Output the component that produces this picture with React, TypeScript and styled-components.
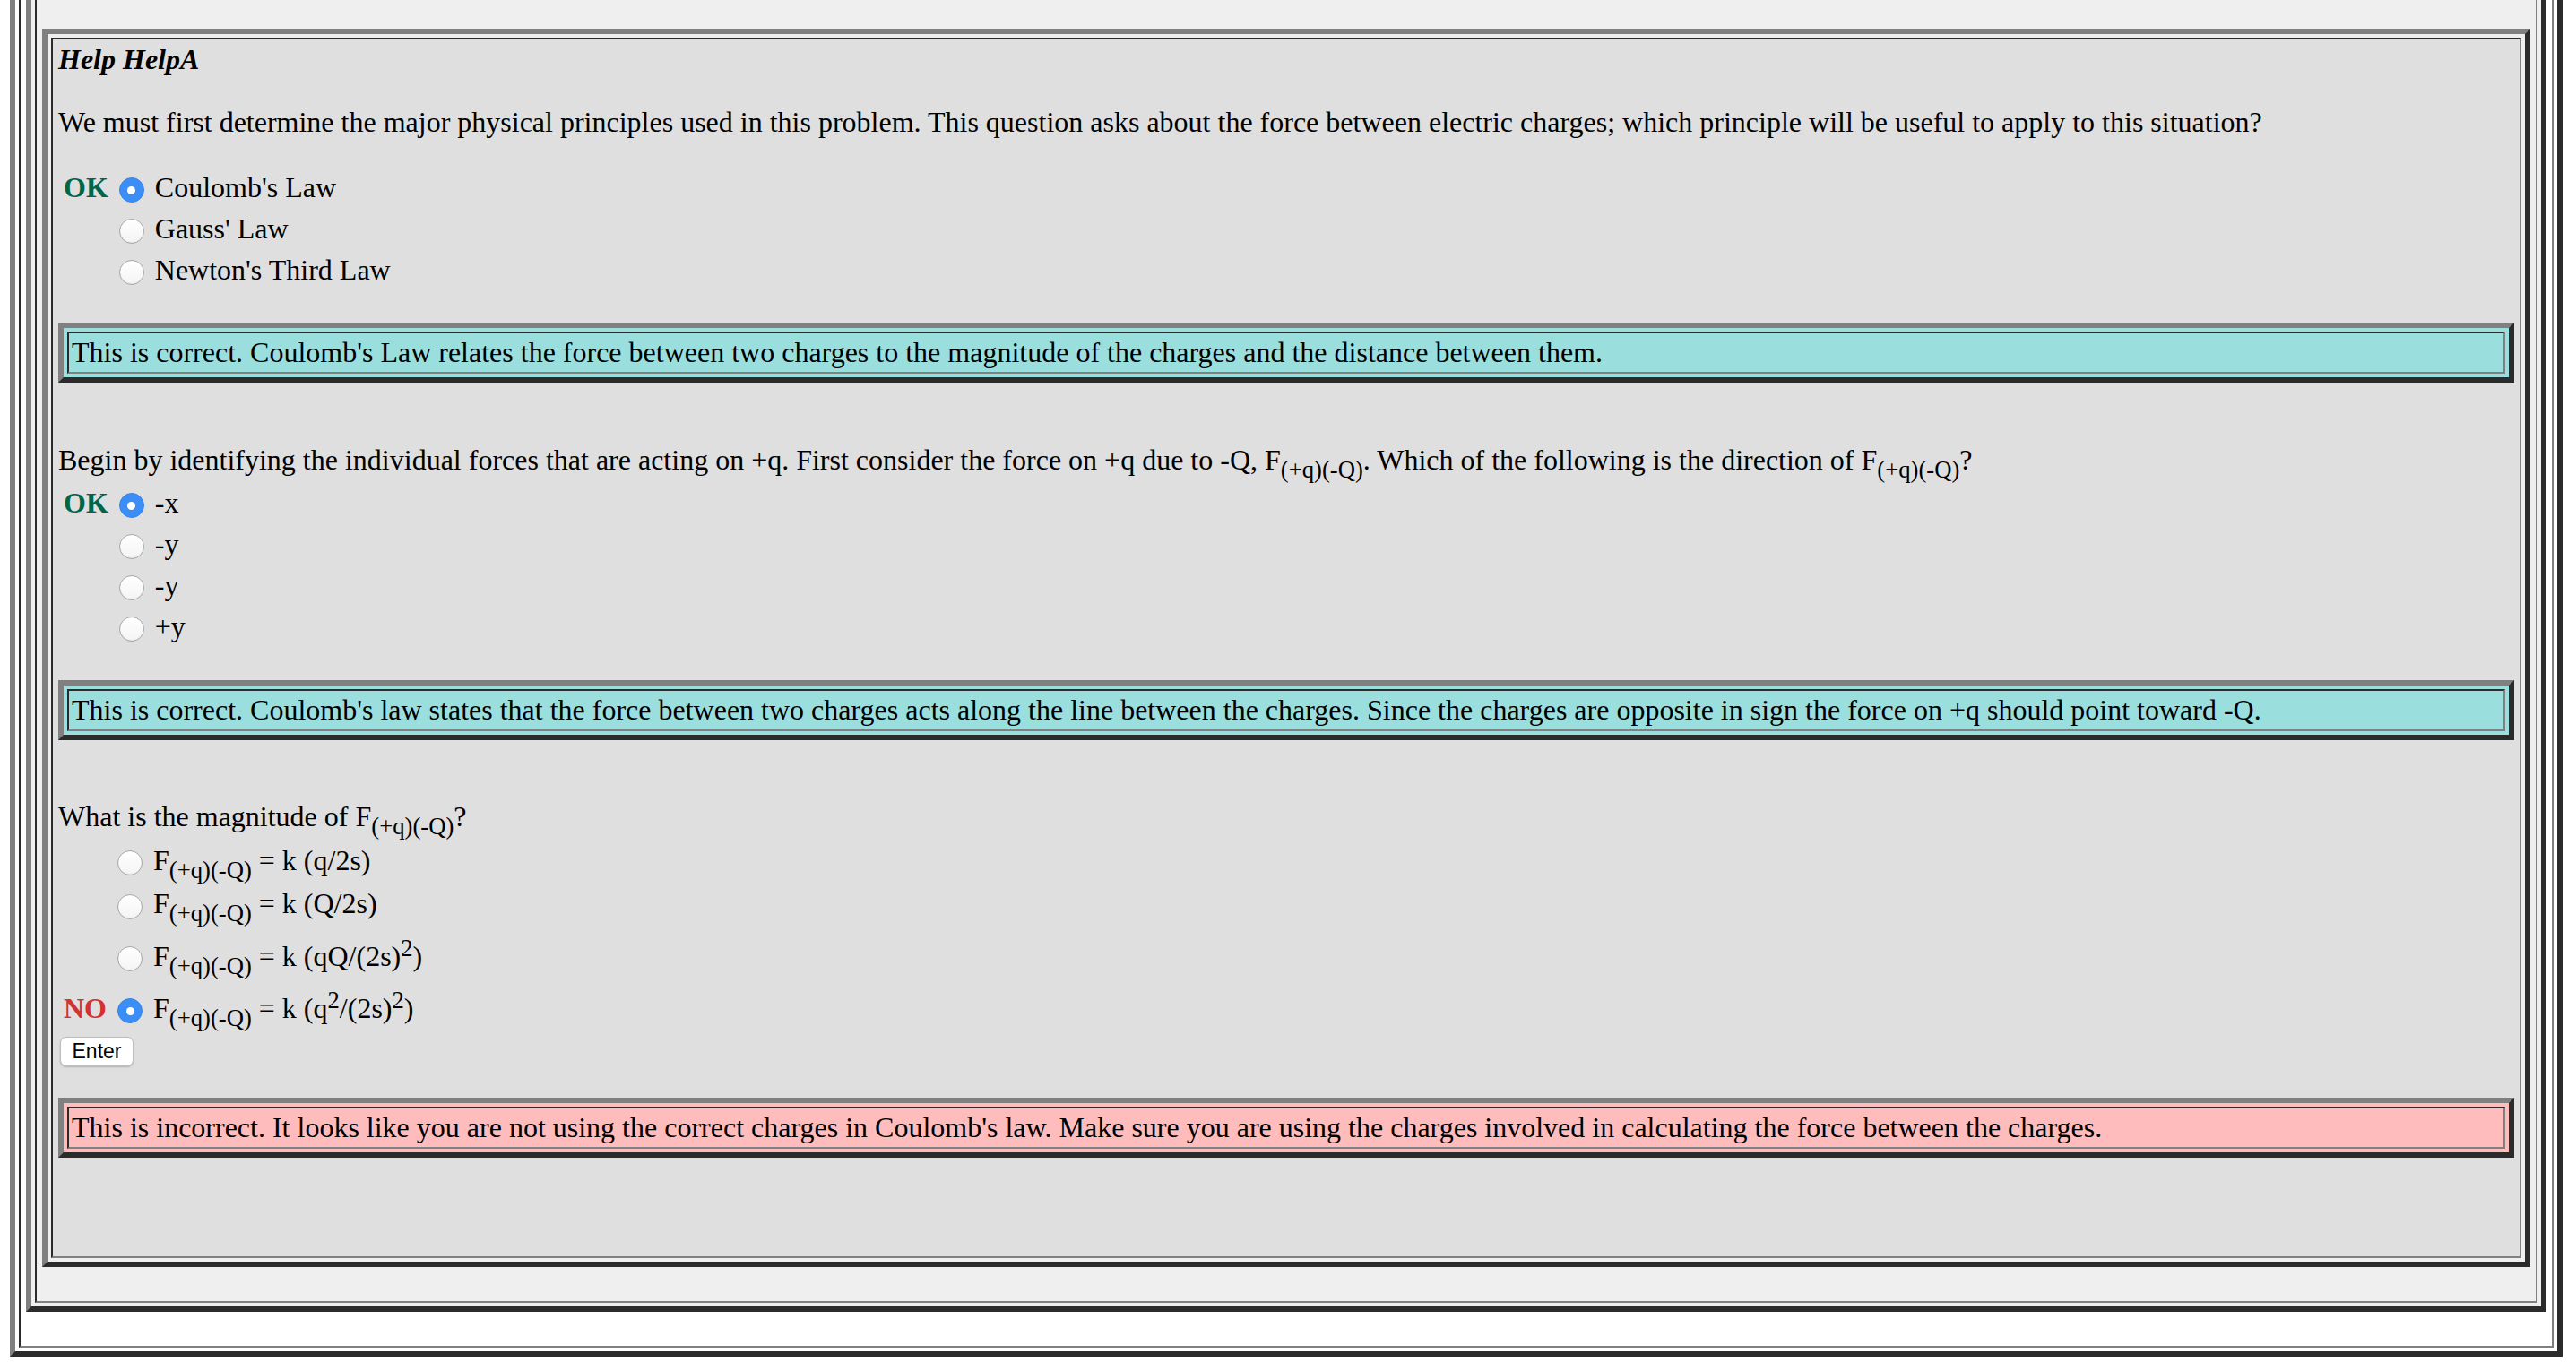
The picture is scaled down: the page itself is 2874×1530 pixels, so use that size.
import React from 'react';
import styled, { createGlobalStyle } from 'styled-components';

const GlobalStyle = createGlobalStyle`
  html, body { margin: 0; padding: 0; background: #ffffff; }
  body {
    font-family: "Liberation Serif", "Times New Roman", serif;
    font-size: 32px;
    color: #000;
    overflow: hidden;
  }
  *, *::before, *::after { box-sizing: border-box; }
`;

const LIGHT = '#808080';
const DARK = '#2b2b2b';

const Page = styled.div`
  margin: -36px 15px 0 11px;
`;

const Frame = styled.div<{ $bg?: string }>`
  border: 6px solid;
  border-color: ${LIGHT} ${DARK} ${DARK} ${LIGHT};
  padding: 4px;
  background: ${(p) => p.$bg ?? 'transparent'};
`;

const Cell = styled.div<{ $bg: string; $pad: string }>`
  border: 2px solid;
  border-color: ${DARK} ${LIGHT} ${LIGHT} ${DARK};
  background: ${(p) => p.$bg};
  padding: ${(p) => p.$pad};
`;

const Title = styled.div`
  margin-top: 4px;
  line-height: 37px;
  font-weight: bold;
  font-style: italic;
`;

const Para = styled.div<{ $mt: number }>`
  margin-top: ${(p) => p.$mt}px;
  line-height: 37px;
  white-space: nowrap;
`;

const Sub = styled.span`
  font-size: 26.67px;
  line-height: 0;
  vertical-align: -9px;
`;

const Sup = styled.span`
  font-size: 26.67px;
  line-height: 0;
  vertical-align: 11px;
`;

const Options = styled.div<{ $rows: string; $mt: number }>`
  display: grid;
  grid-template-columns: auto auto 1fr;
  grid-template-rows: ${(p) => p.$rows};
  column-gap: 12px;
  align-items: center;
  padding-left: 6px;
  margin-top: ${(p) => p.$mt}px;
`;

const Mark = styled.span<{ $color: string }>`
  font-weight: bold;
  line-height: 37px;
  color: ${(p) => p.$color};
`;

const Radio = styled.span<{ $on?: boolean }>`
  display: flex;
  align-items: center;
  justify-content: center;
  width: 28px;
  height: 28px;
  margin-top: 6px;
  border-radius: 50%;
  background: ${(p) => (p.$on ? '#3a8ef6' : 'linear-gradient(#ffffff, #f4f4f4)')};
  border: ${(p) => (p.$on ? '1px solid #3584ea' : '1.5px solid #a8a8a8')};
  box-shadow: ${(p) => (p.$on ? 'none' : 'inset 0 -1px 1px rgba(0, 0, 0, 0.06)')};
  &::after {
    content: '';
    display: ${(p) => (p.$on ? 'block' : 'none')};
    width: 9px;
    height: 9px;
    border-radius: 50%;
    background: #ffffff;
  }
`;

const OptText = styled.span`
  line-height: 37px;
  white-space: nowrap;
`;

const EnterButton = styled.button`
  display: block;
  margin: 7px 0 0 2px;
  width: 82px;
  height: 33px;
  padding: 0;
  font-family: "Liberation Sans", Arial, sans-serif;
  font-size: 23px;
  color: #000;
  background: #ffffff;
  border: 1px solid #bdbdbd;
  border-radius: 7px;
  box-shadow: 0 1px 2px rgba(0, 0, 0, 0.2);
`;

const Feedback = styled.div<{ $tone: 'ok' | 'no'; $mt: number }>`
  margin-top: ${(p) => p.$mt}px;
  border: 6px solid;
  border-color: ${LIGHT} ${DARK} ${DARK} ${LIGHT};
  padding: 4px;
  background: ${(p) => (p.$tone === 'ok' ? '#9adede' : '#ffbcbc')};
`;

const FeedbackCell = styled.div`
  border: 2px solid;
  border-color: ${DARK} ${LIGHT} ${LIGHT} ${DARK};
  padding: 3px;
  line-height: 37px;
  white-space: nowrap;
`;

const F = () => (
  <>
    F<Sub>(+q)(-Q)</Sub>
  </>
);

type Opt = { mark?: 'OK' | 'NO'; on?: boolean; text: React.ReactNode };

const markColor = { OK: '#00664a', NO: '#d43131' };

const OptionList: React.FC<{ opts: Opt[]; rows: string; mt: number }> = ({ opts, rows, mt }) => (
  <Options $rows={rows} $mt={mt}>
    {opts.map((o, i) => (
      <React.Fragment key={i}>
        <Mark $color={o.mark ? markColor[o.mark] : '#000'}>{o.mark ?? ''}</Mark>
        <Radio $on={o.on} />
        <OptText>{o.text}</OptText>
      </React.Fragment>
    ))}
  </Options>
);

export default function App() {
  return (
    <>
      <GlobalStyle />
      <Page>
        <Frame $bg="#ffffff">
          <Cell $bg="#ffffff" $pad="6px 6px 38px">
            <Frame $bg="#efefef">
              <Cell $bg="#efefef" $pad="38px 6px 38px">
                <Frame>
                  <Cell $bg="#dfdfdf" $pad="0 6px 110px">
                    <Title>Help HelpA</Title>
                    <Para $mt={33}>
                      We must first determine the major physical principles used in this problem. This
                      question asks about the force between electric charges; which principle will be
                      useful to apply to this situation?
                    </Para>
                    <OptionList
                      mt={31}
                      rows="46px 46px 46px"
                      opts={[
                        { mark: 'OK', on: true, text: "Coulomb's Law" },
                        { text: "Gauss' Law" },
                        { text: "Newton's Third Law" },
                      ]}
                    />
                    <Feedback $tone="ok" $mt={36}>
                      <FeedbackCell>
                        This is correct. Coulomb's Law relates the force between two charges to the
                        magnitude of the charges and the distance between them.
                      </FeedbackCell>
                    </Feedback>

                    <Para $mt={68}>
                      Begin by identifying the individual forces that are acting on +q. First consider
                      the force on +q due to -Q, <F />. Which of the following is the direction of <F />?
                    </Para>
                    <OptionList
                      mt={6}
                      rows="46px 46px 46px 46px"
                      opts={[
                        { mark: 'OK', on: true, text: '-x' },
                        { text: '-y' },
                        { text: '-y' },
                        { text: '+y' },
                      ]}
                    />
                    <Feedback $tone="ok" $mt={37}>
                      <FeedbackCell>
                        This is correct. Coulomb's law states that the force between two charges acts
                        along the line between the charges. Since the charges are opposite in sign the
                        force on +q should point toward -Q.
                      </FeedbackCell>
                    </Feedback>

                    <Para $mt={67}>
                      What is the magnitude of <F />?
                    </Para>
                    <OptionList
                      mt={7}
                      rows="46px 51px 66px 50px"
                      opts={[
                        { text: <><F /> = k (q/2s)</> },
                        { text: <><F /> = k (Q/2s)</> },
                        { text: <><F /> = k (qQ/(2s)<Sup>2</Sup>)</> },
                        {
                          mark: 'NO',
                          on: true,
                          text: <><F /> = k (q<Sup>2</Sup>/(2s)<Sup>2</Sup>)</>,
                        },
                      ]}
                    />
                    <EnterButton type="button">Enter</EnterButton>
                    <Feedback $tone="no" $mt={35}>
                      <FeedbackCell>
                        This is incorrect. It looks like you are not using the correct charges in
                        Coulomb's law. Make sure you are using the charges involved in calculating the
                        force between the charges.
                      </FeedbackCell>
                    </Feedback>
                  </Cell>
                </Frame>
              </Cell>
            </Frame>
          </Cell>
        </Frame>
      </Page>
    </>
  );
}
